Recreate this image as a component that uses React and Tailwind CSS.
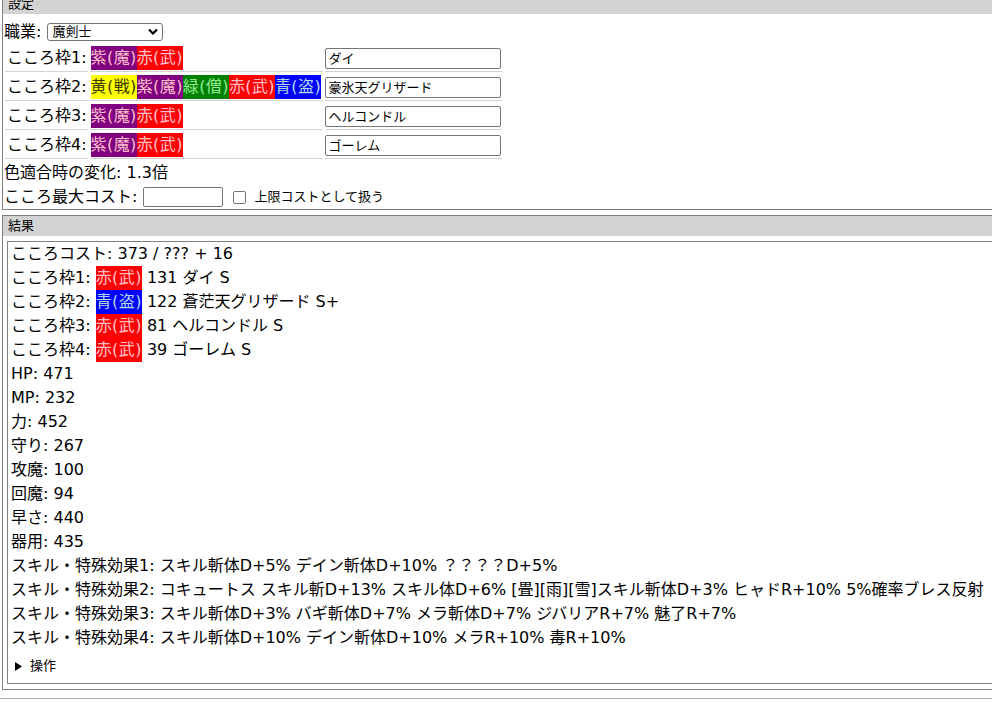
import React from "react";

const COLORS = {
  紫: "bg-[#800080] text-[#ffc0cb]",
  赤: "bg-[#ff0000] text-[#ffc0cb]",
  黄: "bg-[#ffff00] text-[#3a3a00]",
  緑: "bg-[#008000] text-[#90ee90]",
  青: "bg-[#0000ff] text-[#add8e6]",
};
const LABELS = { 紫: "紫(魔)", 赤: "赤(武)", 黄: "黄(戦)", 緑: "緑(僧)", 青: "青(盗)" };

function Chip({ c }) {
  return (
    <span className={`inline-block leading-[24px] tracking-[0.4px] ${COLORS[c]}`}>{LABELS[c]}</span>
  );
}

const slots = [
  { n: 1, colors: ["紫", "赤"], name: "ダイ" },
  { n: 2, colors: ["黄", "紫", "緑", "赤", "青"], name: "豪氷天グリザード" },
  { n: 3, colors: ["紫", "赤"], name: "ヘルコンドル" },
  { n: 4, colors: ["紫", "赤"], name: "ゴーレム" },
];

const results = [
  { n: 1, c: "赤", rest: "131 ダイ S" },
  { n: 2, c: "青", rest: "122 蒼茫天グリザード S+" },
  { n: 3, c: "赤", rest: "81 ヘルコンドル S" },
  { n: 4, c: "赤", rest: "39 ゴーレム S" },
];

const stats = [
  "HP: 471",
  "MP: 232",
  "力: 452",
  "守り: 267",
  "攻魔: 100",
  "回魔: 94",
  "早さ: 440",
  "器用: 435",
  "スキル・特殊効果1: スキル斬体D+5% デイン斬体D+10% ？？？？D+5%",
  "スキル・特殊効果2: コキュートス スキル斬D+13% スキル体D+6% [畳][雨][雪]スキル斬体D+3% ヒャドR+10% 5%確率ブレス反射",
  "スキル・特殊効果3: スキル斬体D+3% バギ斬体D+7% メラ斬体D+7% ジバリアR+7% 魅了R+7%",
  "スキル・特殊効果4: スキル斬体D+10% デイン斬体D+10% メラR+10% 毒R+10%",
];

export default function App() {
  return (
    <div
      className="w-[992px] h-[711px] overflow-hidden bg-white text-black text-[16px]"
      style={{ fontFamily: '"DejaVu Sans", "Noto Sans CJK JP", sans-serif' }}
    >
      <div className="w-[1300px] -mt-[7px] pl-[2px]">
        {/* 設定 */}
        <div className="border border-[#808080]">
          <div className="bg-[#d3d3d3] h-[20px] pl-[5px] text-[13px] leading-[20px]">設定</div>
          <div className="mt-[7px] flex items-center h-[21px] leading-[21px] pl-[1px]">
            <span>職業:</span>
            <div className="ml-[6px] w-[116px] h-[18px] border border-[#767676] rounded-[3px] flex items-center justify-between pl-[4px] pr-[4px] text-[13px] leading-[16px]">
              <span>魔剣士</span>
              <svg width="10" height="7" viewBox="0 0 10 7">
                <path d="M1 1.5 L5 5.5 L9 1.5" fill="none" stroke="#000" strokeWidth="2.2" />
              </svg>
            </div>
          </div>
          <table className="mt-[1px] border-separate border-spacing-[2px]">
            <tbody>
              {slots.map((s) => (
                <tr key={s.n}>
                  <td className="border-b border-[#d3d3d3] p-[1px] pl-[2px] leading-[24px] whitespace-nowrap">
                    こころ枠{s.n}:
                  </td>
                  <td className="border-b border-[#d3d3d3] p-[1px] w-[233px] leading-[24px] whitespace-nowrap">
                    {s.colors.map((c, i) => (
                      <Chip key={i} c={c} />
                    ))}
                  </td>
                  <td className="border-b border-[#d3d3d3] p-[1px] pl-[0px] align-middle">
                    <div className="w-[176px] h-[21px] border border-[#767676] rounded-[2px] pl-[3px] text-[13px] leading-[19px] whitespace-nowrap">
                      {s.name}
                    </div>
                  </td>
                </tr>
              ))}
            </tbody>
          </table>
          <div className="leading-[24px] pl-[1px]">色適合時の変化: 1.3倍</div>
          <div className="flex items-center h-[24px] pl-[1px]">
            <span>こころ最大コスト:</span>
            <div className="ml-[6px] w-[80px] h-[20px] border border-[#767676] rounded-[2px]" />
            <div className="ml-[10px] w-[13px] h-[13px] border border-[#767676] rounded-[2px]" />
            <span className="ml-[8px] text-[13px]">上限コストとして扱う</span>
          </div>
        </div>

        {/* 結果 */}
        <div className="mt-[5px] border border-[#808080] pb-[5px]">
          <div className="bg-[#d3d3d3] h-[20px] pl-[5px] text-[13px] leading-[20px]">結果</div>
          <div className="mt-[5px] ml-[4px] border border-[#808080] px-[3px]">
            <div className="leading-[24px] whitespace-nowrap">こころコスト: 373 / ??? + 16</div>
            {results.map((r) => (
              <div key={r.n} className="leading-[24px] whitespace-nowrap">
                こころ枠{r.n}: <Chip c={r.c} /> {r.rest}
              </div>
            ))}
            {stats.map((s, i) => (
              <div key={i} className="leading-[24px] whitespace-nowrap">
                {s}
              </div>
            ))}
            <div className="mt-[6px] mb-[7px] flex items-center h-[20px] text-[13px] pl-[4px]">
              <svg width="7" height="9" viewBox="0 0 7 9" className="mr-[8px]">
                <polygon points="0,0 7,4.5 0,9" fill="#000" />
              </svg>
              <span>操作</span>
            </div>
          </div>
        </div>
        <div className="mt-[8px] border-t border-[#b0b0b0] -ml-[2px]" />
      </div>
    </div>
  );
}
